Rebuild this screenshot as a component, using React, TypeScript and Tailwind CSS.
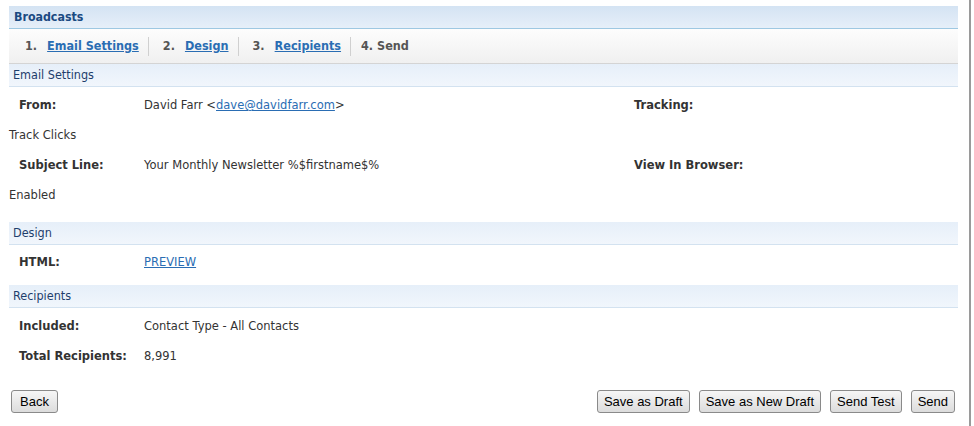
import React from "react";

const body = { fontFamily: '"DejaVu Sans", Verdana, sans-serif' };
const head = { fontFamily: '"DejaVu Sans Condensed", "DejaVu Sans", sans-serif' };

function SectionHeader({ title }: { title: string }) {
  return (
    <div
      className="h-[23px] flex items-center pl-[4px] border-b border-[#d3e2f0] bg-gradient-to-b from-[#e6eff9] to-[#f1f6fc] text-[12.5px] text-[#1e3e6c]"
      style={head}
    >
      {title}
    </div>
  );
}

function Label({ children }: { children: React.ReactNode }) {
  return <div className="w-[135px] pl-[10px] font-bold text-[#333]">{children}</div>;
}

function Btn({ children, wide }: { children: React.ReactNode; wide?: boolean }) {
  return (
    <button
      className={
        wide
          ? "h-[23px] px-[8px] border border-[#8a8a8a] rounded-[3px] bg-gradient-to-b from-[#f6f6f6] to-[#dcdcdc] text-[13px] text-black leading-none"
          : "h-[23px] px-[6px] border border-[#8a8a8a] rounded-[3px] bg-gradient-to-b from-[#f6f6f6] to-[#dcdcdc] text-[13px] text-black leading-none"
      }
      style={{ fontFamily: '"Liberation Sans", Arial, sans-serif' }}
    >
      {children}
    </button>
  );
}

function Sep({ last }: { last?: boolean }) {
  return <span className={last ? "ml-[9px] mr-[10px] w-px h-[19px] bg-[#d0d0d0]" : "ml-[9px] mr-[14px] w-px h-[19px] bg-[#d0d0d0]"} />;
}

export default function App() {
  return (
    <div className="w-[971px] h-[426px] border-r-[2px] border-[#9a9a9a] bg-white text-[11.5px] text-[#333]" style={body}>
      <div className="ml-[9px] w-[949px] pt-[6px]">
        <div
          className="h-[23px] flex items-center pl-[5px] border-b border-[#9ec8e2] bg-gradient-to-b from-[#d4e3f3] to-[#e6eff9] text-[12.3px] font-bold text-[#1b4a82]"
          style={head}
        >
          Broadcasts
        </div>
        <div
          className="h-[35px] flex items-center pl-[16px] pt-[1px] border-b border-[#d4d4d4] bg-gradient-to-b from-[#fdfdfd] to-[#f0f0f0] text-[12.5px] font-bold text-[#555]"
          style={head}
        >
          <span className="mr-[10px]">1.</span>
          <a className="text-[#2a6db3] underline">Email Settings</a>
          <Sep />
          <span className="mr-[10px]">2.</span>
          <a className="text-[#2a6db3] underline">Design</a>
          <Sep />
          <span className="mr-[10px]">3.</span>
          <a className="text-[#2a6db3] underline">Recipients</a>
          <Sep last />
          <span>4. Send</span>
        </div>
        <SectionHeader title="Email Settings" />
        <div className="pt-[4px] pb-[11px]">
          <div className="h-[30px] flex items-center">
            <Label>From:</Label>
            <div className="w-[490px]">
              David Farr &lt;<a className="text-[#2a6db3] underline">dave@davidfarr.com</a>&gt;
            </div>
            <div className="font-bold">Tracking:</div>
          </div>
          <div className="h-[30px] flex items-center">Track Clicks</div>
          <div className="h-[30px] flex items-center">
            <Label>Subject Line:</Label>
            <div className="w-[490px]">Your Monthly Newsletter %$firstname$%</div>
            <div className="font-bold">View In Browser:</div>
          </div>
          <div className="h-[30px] flex items-center">Enabled</div>
        </div>
        <SectionHeader title="Design" />
        <div className="pt-[3px] pb-[7px]">
          <div className="h-[30px] flex items-center">
            <Label>HTML:</Label>
            <a className="text-[#2a6db3] underline">PREVIEW</a>
          </div>
        </div>
        <SectionHeader title="Recipients" />
        <div className="pt-[4px] pb-[18px]">
          <div className="h-[30px] flex items-center">
            <Label>Included:</Label>
            <div>Contact Type - All Contacts</div>
          </div>
          <div className="h-[30px] flex items-center">
            <Label>Total Recipients:</Label>
            <div>8,991</div>
          </div>
        </div>
        <div className="flex items-center pl-[2px] pr-[3px]">
          <Btn wide>Back</Btn>
          <div className="flex-1" />
          <div className="flex gap-[9px]">
            <Btn>Save as Draft</Btn>
            <Btn>Save as New Draft</Btn>
            <Btn>Send Test</Btn>
            <Btn>Send</Btn>
          </div>
        </div>
      </div>
    </div>
  );
}
